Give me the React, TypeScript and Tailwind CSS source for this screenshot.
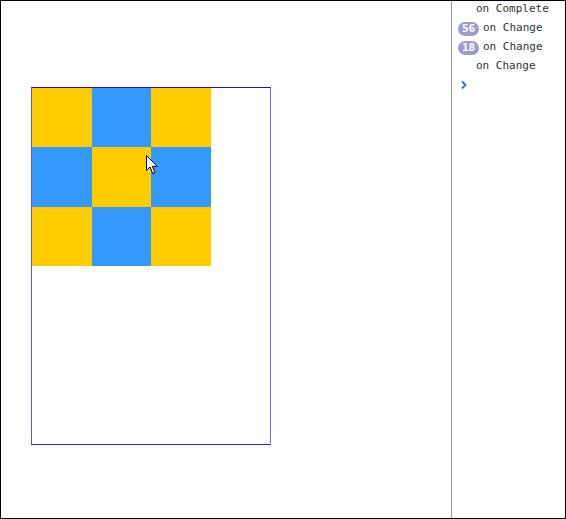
const cells = ['y', 'b', 'y', 'b', 'y', 'b', 'y', 'b', 'y']

type LogRow = { badge?: string; label: string }

const rows: LogRow[] = [
  { label: 'on Complete' },
  { badge: '56', label: 'on Change' },
  { badge: '18', label: 'on Change' },
  { label: 'on Change' },
]

function Cursor() {
  return (
    <svg width="13" height="20" viewBox="0 0 13 20" className="absolute left-[145px] top-[154px]">
      <path d="M0.5 0.5 L0.5 15.5 L4 12 L6.8 18.5 L9 17.5 L6.3 11.3 L11.2 11.3 Z" fill="#fff" stroke="#000" strokeWidth="1" strokeLinejoin="miter" />
    </svg>
  )
}

export default function App() {
  return (
    <div className="flex h-[519px] w-[566px] border border-black bg-white" style={{ fontFamily: '"DejaVu Sans Mono", monospace' }}>
      <div className="relative flex-1">
        <div className="ml-[30px] mt-[86px] h-[358px] w-[240px] border border-t-[#2a0ad0] border-b-[#2a2ad0] border-l-[#7a4ac8] border-r-[#6c6cf5]">
          <div className="grid w-[179px] grid-cols-[60px_59px_60px] grid-rows-[59px_60px_59px]">
            {cells.map((c, i) => (
              <div key={i} className={c === 'y' ? 'bg-[#ffcc00]' : 'bg-[#3399ff]'} />
            ))}
          </div>
        </div>
        <Cursor />
      </div>
      <div className="w-[114px] border-l border-[#999]">
        <div className="-mt-[1px] flex flex-col">
          {rows.map((r, i) => (
            <div key={i} className="flex h-[19px] items-center text-[11px] text-[#333]">
              {r.badge ? (
                <>
                  <span className="ml-[6px] flex h-[14px] w-[21px] items-center justify-center rounded-full bg-[#9d9dcc] text-[11px] font-bold leading-none text-white">
                    {r.badge}
                  </span>
                  <span className="ml-[4px]">{r.label}</span>
                </>
              ) : (
                <span className="ml-[24px]">{r.label}</span>
              )}
            </div>
          ))}
          <div className="-mt-[1px] flex h-[19px] items-center pl-[8px]">
            <svg width="8" height="10" viewBox="0 0 8 10">
              <path d="M2 1.5 L5.5 5 L2 8.5" fill="none" stroke="#2a6ff0" strokeWidth="1.8" />
            </svg>
          </div>
        </div>
      </div>
    </div>
  )
}
